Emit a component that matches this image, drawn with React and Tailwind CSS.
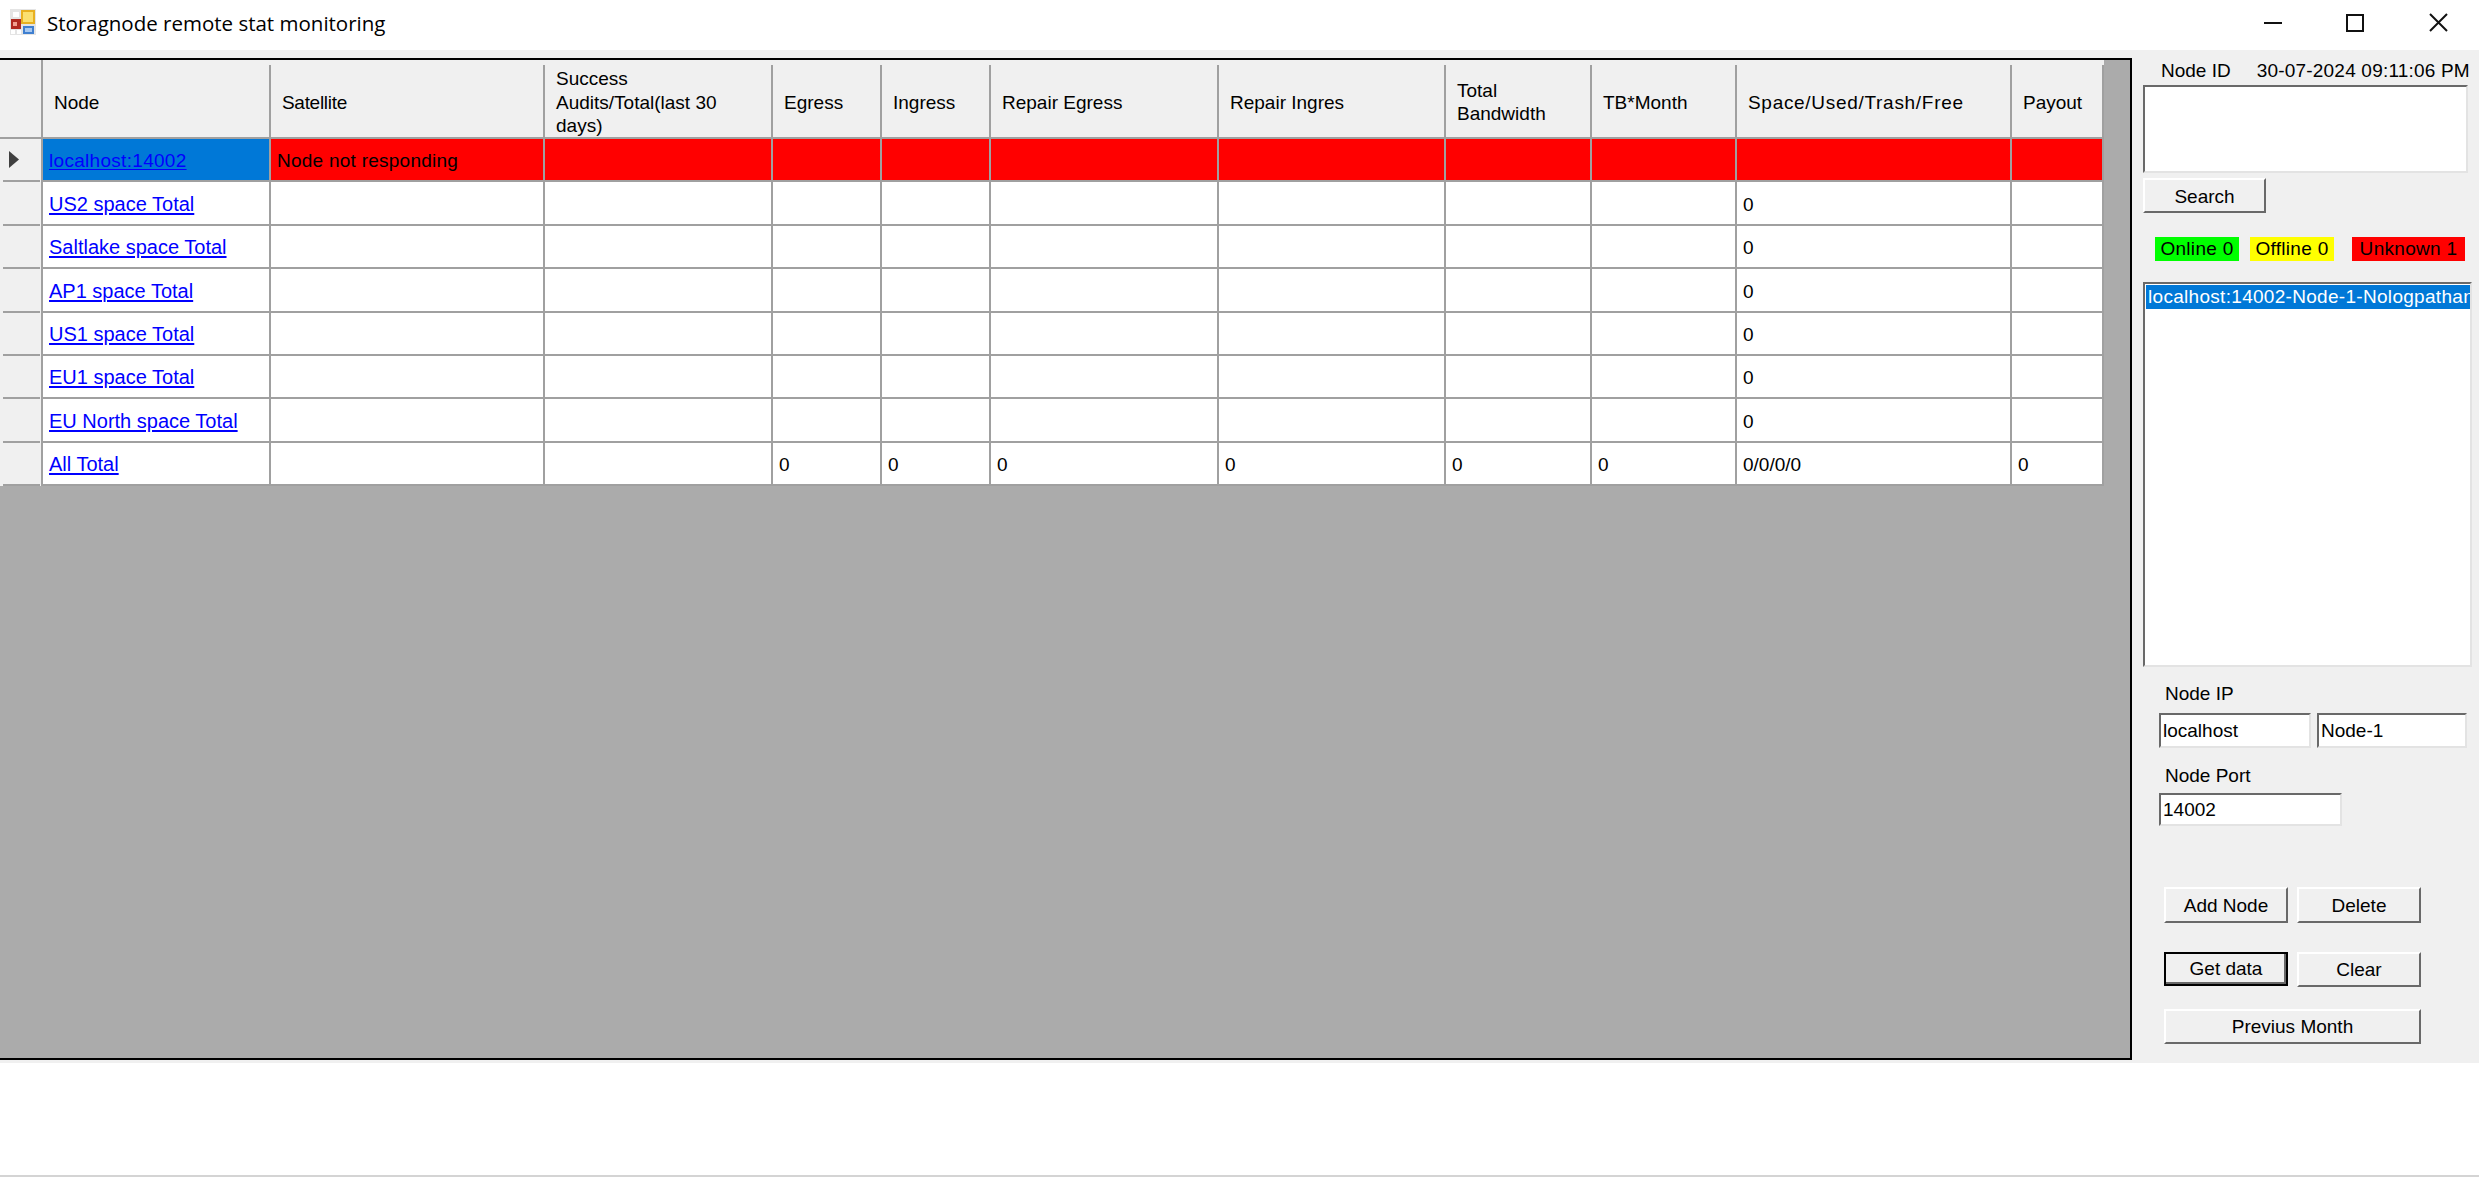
const gridCols = 'grid grid-cols-[43px_228px_274px_228px_109px_109px_228px_227px_146px_145px_275px_92px] w-[2104px]';

const headers = [
  ['Node', ''],
  ['Satellite', 'tracking-[-0.3px]'],
  ['Success Audits/Total(last 30 days)', ''],
  ['Egress', ''],
  ['Ingress', ''],
  ['Repair Egress', ''],
  ['Repair Ingres', ''],
  ['Total Bandwidth', ''],
  ['TB*Month', ''],
  ['Space/Used/Trash/Free', 'tracking-[0.7px]'],
  ['Payout', ''],
];

const spaceRows = [
  'US2 space Total',
  'Saltlake space Total',
  'AP1 space Total',
  'US1 space Total',
  'EU1 space Total',
  'EU North space Total',
];

function RowHeader({ current }) {
  return (
    <div className="h-full bg-[#f0f0f0] border-r-2 border-[#a0a0a0] pl-[3px] pr-[1px] flex flex-col">
      <div className="flex-1 flex items-center pl-[6px]">
        {current && (
          <svg width="10" height="17" viewBox="0 0 10 17">
            <path d="M0 0L10 8.5L0 17Z" fill="#404040" />
          </svg>
        )}
      </div>
      <div className="h-[2px] bg-[#a0a0a0]" />
    </div>
  );
}

function Cell({ children, className = '' }) {
  return (
    <div className={`h-full border-r-2 border-b-2 border-[#a0a0a0] pl-[6px] pt-[3px] flex items-center overflow-hidden whitespace-nowrap ${className}`}>
      {children}
    </div>
  );
}

function DataRow({ name, values = {} }) {
  return (
    <div className={`${gridCols} h-[43.4px] bg-white`}>
      <RowHeader />
      <Cell><span className="underline underline-offset-2 text-[#0000ff] text-[20px]">{name}</span></Cell>
      {Array.from({ length: 10 }).map((_, i) => (
        <Cell key={i}>{values[i]}</Cell>
      ))}
    </div>
  );
}

function Raised({ children, className = '' }) {
  return (
    <div className={`h-[35px] flex items-center justify-center bg-[#f0f0f0] border-2 border-t-white border-l-white border-r-[#696969] border-b-[#696969] ${className}`}>
      {children}
    </div>
  );
}

function Sunken({ children, className = '' }) {
  return (
    <div className={`bg-white border-2 border-t-[#696969] border-l-[#696969] border-r-[#e3e3e3] border-b-[#e3e3e3] pl-[2px] flex items-center ${className}`}>
      {children}
    </div>
  );
}

function AppIcon() {
  return (
    <svg width="26" height="26" viewBox="0 0 26 26" className="self-start mt-[9px]">
      <rect x="0" y="0" width="26" height="26" fill="#e4e4e4" />
      <rect x="11" y="1" width="14" height="14" fill="#e8b020" />
      <rect x="13" y="3" width="10" height="10" fill="#fbe070" />
      <rect x="1" y="10" width="10" height="10" fill="#b02a20" />
      <rect x="3" y="13" width="4" height="4" fill="#f0a090" />
      <rect x="13" y="17" width="11" height="8" fill="#3f7fd0" />
      <rect x="15" y="19" width="7" height="4" fill="#a8c8f0" />
      <rect x="1" y="21" width="4" height="4" fill="#ffffff" />
      <rect x="7" y="21" width="4" height="4" fill="#ffffff" />
      <rect x="3" y="3" width="6" height="5" fill="#ffffff" />
    </svg>
  );
}

export default function App() {
  return (
    <div className="w-[2479px] h-[1177px] bg-white flex flex-col overflow-hidden text-[19px] leading-[23.5px] text-black font-['Liberation_Sans',Arial,sans-serif]">
      {/* title bar */}
      <div className="h-[50px] shrink-0 flex items-center pl-[10px]">
        <AppIcon />
        <span className="ml-[11px] mb-[2px] text-[20.5px] font-['Open_Sans',sans-serif]">Storagnode remote stat monitoring</span>
        <div className="ml-auto self-start mt-[13px] flex items-center text-[#111]">
          <svg width="18" height="18" viewBox="0 0 18 18" className="mr-[64px]">
            <path d="M0 9H18" stroke="currentColor" strokeWidth="2" />
          </svg>
          <svg width="18" height="18" viewBox="0 0 18 18" className="mr-[65px]">
            <rect x="1" y="1" width="16" height="16" fill="none" stroke="currentColor" strokeWidth="2" />
          </svg>
          <svg width="19" height="19" viewBox="0 0 19 19" className="mr-[31px]">
            <path d="M1 1L18 18M18 1L1 18" stroke="currentColor" strokeWidth="2" />
          </svg>
        </div>
      </div>

      <div className="h-[1013px] shrink-0 bg-[#f0f0f0] flex pt-[8px]">
        {/* data grid */}
        <div className="w-[2132px] h-[1002px] shrink-0 bg-[#ababab] border-t-2 border-b-2 border-r-2 border-black">
          <div className={`${gridCols} h-[79px] bg-[#f0f0f0] border-b-2 border-[#a0a0a0]`}>
            <div className="h-full border-r-2 border-[#a0a0a0]" />
            {headers.map(([h, cls]) => (
              <div key={h} className="h-full pt-[5px] pb-[2px]">
                <div className="h-full border-r-2 border-[#a0a0a0] pl-[11px] pr-[20px] pt-[2px] flex items-center">
                  <span className={cls}>{h}</span>
                </div>
              </div>
            ))}
          </div>

          <div className={`${gridCols} h-[43.4px]`}>
            <RowHeader current />
            <Cell className="bg-[#0078d7] pl-[5px]">
              <span className="underline underline-offset-2 text-[#0000ff] tracking-[0.3px]">localhost:14002</span>
            </Cell>
            <Cell className="bg-[#ff0000] tracking-[0.25px]">Node not responding</Cell>
            {Array.from({ length: 9 }).map((_, i) => (
              <Cell key={i} className="bg-[#ff0000]" />
            ))}
          </div>

          {spaceRows.map((name) => (
            <DataRow key={name} name={name} values={{ 8: '0' }} />
          ))}
          <DataRow
            name="All Total"
            values={{ 2: '0', 3: '0', 4: '0', 5: '0', 6: '0', 7: '0', 8: '0/0/0/0', 9: '0' }}
          />
        </div>

        {/* side panel */}
        <div className="flex-1 pl-[11px] flex flex-col items-start">
          <div className="flex h-[24px] items-center pt-[2px]">
            <span className="ml-[18px]">Node ID</span>
            <span className="ml-[26px] whitespace-nowrap tracking-[0.2px]">30-07-2024 09:11:06 PM</span>
          </div>
          <Sunken className="w-[325px] h-[88px] mt-[3px]" />
          <Raised className="w-[123px] mt-[5px] pt-[2px]">Search</Raised>

          <div className="flex h-[24px] mt-[24px] text-center tracking-[0.3px]">
            <div className="ml-[12px] w-[84px] bg-[#00ff00]">Online 0</div>
            <div className="ml-[11px] w-[84px] bg-[#ffff00]">Offline 0</div>
            <div className="ml-[18px] w-[113px] bg-[#ff0000]">Unknown 1</div>
          </div>

          <div className="w-[329px] h-[385px] mt-[21px] bg-white border-2 border-t-[#696969] border-l-[#696969] border-r-[#e3e3e3] border-b-[#e3e3e3] pt-[1px] pl-[1px]">
            <div className="h-[24px] bg-[#0078d7] text-white pl-[2px] overflow-hidden whitespace-nowrap tracking-[0.3px]">
              localhost:14002-Node-1-Nologpathan
            </div>
          </div>

          <div className="ml-[22px] mt-[15px] h-[24px] flex items-center">Node IP</div>
          <div className="flex mt-[7px] ml-[16px] gap-[6px]">
            <Sunken className="w-[152px] h-[35px]">localhost</Sunken>
            <Sunken className="w-[150px] h-[35px]">Node-1</Sunken>
          </div>
          <div className="ml-[22px] mt-[16px] h-[24px] flex items-center">Node Port</div>
          <Sunken className="w-[183px] h-[33px] ml-[16px] mt-[5px]">14002</Sunken>

          <div className="ml-[21px] mt-[61px] flex gap-[9px]">
            <Raised className="w-[124px] h-[36px] pt-[1px]">Add Node</Raised>
            <Raised className="w-[124px] h-[36px] pt-[1px]">Delete</Raised>
          </div>
          <div className="ml-[21px] mt-[29px] flex gap-[9px]">
            <div className="w-[124px] h-[34px] flex items-center justify-center bg-[#f0f0f0] border-2 border-black shadow-[inset_-2px_-2px_0_#696969]">Get data</div>
            <Raised className="w-[124px] h-[34px]">Clear</Raised>
          </div>
          <Raised className="w-[257px] h-[34px] ml-[21px] mt-[22px]">Previus Month</Raised>
        </div>
      </div>

      <div className="flex-1" />
      <div className="h-[2px] shrink-0 bg-[#d4d4d4]" />
    </div>
  );
}
